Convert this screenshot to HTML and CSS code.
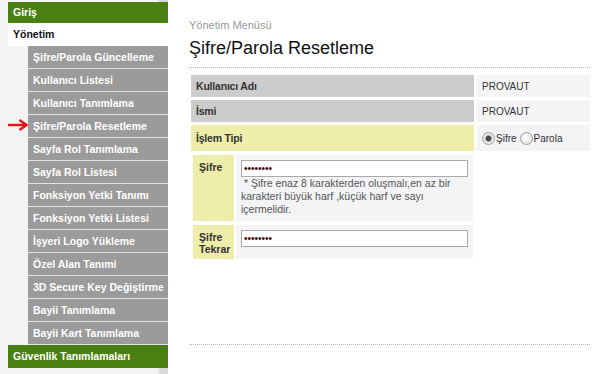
FILE: index.html
```html
<!DOCTYPE html>
<html lang="tr">
  <head>
    <meta charset="UTF-8" />
    <meta name="viewport" content="width=device-width, initial-scale=1.0" />
    <title>Şifre/Parola Resetleme</title>
    <link rel="stylesheet" href="styles.css">
  </head>
  <body>
    <div class="sidebar">
      <div class="menu-head">Giriş</div>
      <div class="menu-open">Yönetim</div>
      <ul class="submenu">
        <li><a href="#">Şifre/Parola Güncelleme</a></li>
        <li><a href="#">Kullanıcı Listesi</a></li>
        <li><a href="#">Kullanıcı Tanımlama</a></li>
        <li class="active">
          <svg class="arrow" width="20" height="22" viewBox="0 0 20 22">
            <path d="M0 10 H18 M11.5 5 L18.5 10 L11.5 15" fill="none" stroke="#e8141b" stroke-width="2.4" />
          </svg>
          <a href="#">Şifre/Parola Resetleme</a>
        </li>
        <li><a href="#">Sayfa Rol Tanımlama</a></li>
        <li><a href="#">Sayfa Rol Listesi</a></li>
        <li><a href="#">Fonksiyon Yetki Tanımı</a></li>
        <li><a href="#">Fonksiyon Yetki Listesi</a></li>
        <li><a href="#">İşyeri Logo Yükleme</a></li>
        <li><a href="#">Özel Alan Tanımi</a></li>
        <li><a href="#">3D Secure Key Değiştirme</a></li>
        <li><a href="#">Bayii Tanımlama</a></li>
        <li><a href="#">Bayii Kart Tanımlama</a></li>
      </ul>
      <div class="menu-head">Güvenlik Tanımlamaları</div>
    </div>

    <div class="content">
      <div class="breadcrumb">Yönetim Menüsü</div>
      <h1>Şifre/Parola Resetleme</h1>
      <div class="dots"></div>

      <form class="reset-form">
        <div class="label">Kullanıcı Adı</div>
        <div class="value">PROVAUT</div>
        <div class="label">İsmi</div>
        <div class="value">PROVAUT</div>
        <div class="label yellow">İşlem Tipi</div>
        <div class="value">
          <input type="radio" name="tip" id="tip1" checked /><label for="tip1">Şifre</label>
          <input type="radio" name="tip" id="tip2" /><label for="tip2">Parola</label>
        </div>
        <div class="password-box">
          <div class="pw-label">Şifre</div>
          <div class="pw-field">
            <input type="password" value="12345678" />
            <div class="note">&nbsp;* Şifre enaz 8 karakterden oluşmalı,en az bir karakteri büyük harf ,küçük harf ve sayı içermelidir.</div>
          </div>
          <div class="pw-label">Şifre Tekrar</div>
          <div class="pw-field">
            <input type="password" value="12345678" />
          </div>
        </div>
      </form>

      <div class="dots bottom"></div>
    </div>
  </body>
</html>
```

FILE: styles.css
```css
body {
  margin: 0;
  display: flex;
  font-family: "Liberation Sans", Arial, sans-serif;
  font-size: 10.5px;
  color: #333333;
  background-color: #ffffff;
}
.sidebar {
  width: 160px;
  min-height: 374px;
  padding: 2px 0 0 8px;
  background: linear-gradient(to right, #f3f3f3 158px, #d9d9d9 160px);
}
.menu-head {
  height: 21px;
  line-height: 21px;
  padding-left: 5px;
  background-color: #4a7f12;
  color: #ffffff;
  font-weight: bold;
  white-space: nowrap;
}
.submenu + .menu-head {
  height: 23px;
  line-height: 23px;
}
.menu-open {
  height: 23px;
  line-height: 23px;
  padding-left: 5px;
  background-color: #ffffff;
  color: #111111;
  font-weight: bold;
}
.submenu {
  list-style: none;
  margin: 0;
  padding: 0;
}
.submenu li {
  display: flex;
  padding-left: 20px;
}
.submenu li.active {
  padding-left: 0;
}
.submenu .arrow {
  flex: none;
}
.submenu a {
  flex: 1;
  display: block;
  height: 22px;
  line-height: 22px;
  padding-left: 5px;
  border-bottom: 1px solid #e2e2e2;
  background-color: #9b9b9b;
  color: #ffffff;
  font-weight: bold;
  text-decoration: none;
  white-space: nowrap;
  overflow: hidden;
}
.content {
  flex: 1;
  padding: 19px 3px 0 21px;
}
.breadcrumb {
  line-height: 13px;
  font-size: 11px;
  color: #999999;
}
h1 {
  margin: 5px 0 0;
  font-size: 18px;
  line-height: 22px;
  font-weight: normal;
  color: #111111;
}
.dots {
  margin-top: 8px;
  border-top: 1px dotted #b5b5b5;
}
.dots.bottom {
  margin-top: 85px;
}
.reset-form {
  display: grid;
  grid-template-columns: 283px 113px;
  gap: 3px;
  margin: 7px 0 0 2px;
}
.label {
  height: 22px;
  line-height: 22px;
  padding-left: 5px;
  background-color: #cccccc;
  font-weight: bold;
  letter-spacing: -0.2px;
}
.label.yellow {
  height: 26px;
  line-height: 26px;
  background-color: #eeeeaa;
}
.value {
  display: flex;
  align-items: center;
  padding-left: 5px;
  font-size: 10px;
  background-color: #f4f4f6;
}
.value input[type="radio"] {
  appearance: none;
  width: 13px;
  height: 13px;
  margin: 0 1px 0 0;
  border: 1px solid #a0a0a0;
  border-radius: 50%;
  background: radial-gradient(circle at 40% 40%, #ffffff, #d8d8d8);
}
.value input[type="radio"]:checked {
  background: radial-gradient(circle, #4a4a4a 0 2.5px, #e6e6e6 3.5px);
}
.value label + input[type="radio"] {
  margin-left: 3px;
}
.password-box {
  display: grid;
  grid-template-columns: 41px 237px;
  column-gap: 2px;
  row-gap: 4px;
  padding: 1px 0 0 2px;
}
.pw-label {
  padding: 6px 6px 4px;
  line-height: 12px;
  background-color: #eeeeaa;
  font-weight: bold;
}
.pw-field {
  padding: 5px;
  background-color: #f4f4f6;
}
.pw-field input {
  box-sizing: border-box;
  display: block;
  width: 227px;
  height: 17px;
  margin: 0;
  padding: 0 2px;
  border: 1px solid #a9a9a9;
  font-family: "Liberation Sans", Arial, sans-serif;
  font-size: 10px;
  color: #400000;
  background-color: #ffffff;
}
.note {
  line-height: 13px;
  color: #555555;
}
```
